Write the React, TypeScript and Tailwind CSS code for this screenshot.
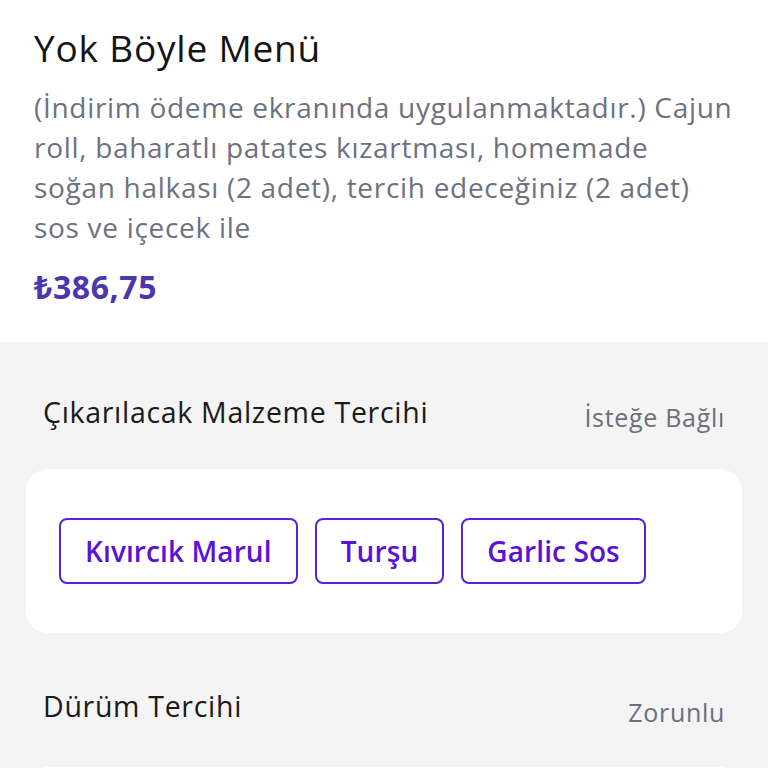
import React, { FC } from 'react';

const font = { fontFamily: '"Open Sans", "Noto Sans", sans-serif' };

interface IChip {
  label: string;
}
const Chip: FC<IChip> = ({ label }) => (
  <div className="h-[66px] px-[24px] flex items-center rounded-[8px] border-2 border-[#5b21d6] text-[#5a12d4] text-[28px] leading-[36px] font-semibold tracking-[0.1px]">
    {label}
  </div>
);

interface ISection {
  title: string;
  tag: string;
  tagTop: string;
}
const SectionHead: FC<ISection> = ({ title, tag, tagTop }) => (
  <div className="flex items-start justify-between pl-[43px] pr-[43px]">
    <span className="text-[28.5px] leading-[36px] text-[#1a1a1a] tracking-[0.7px]">{title}</span>
    <span className={`text-[25px] leading-[36px] text-[#6b6f7b] tracking-[0.7px] ${tagTop}`}>{tag}</span>
  </div>
);

const App: FC = () => {
  return (
    <div className="w-[768px] h-[768px] overflow-hidden bg-[#f4f4f4]" style={font}>
      {/* ürün bilgisi */}
      <div className="bg-white px-[34px] pt-[24px] pb-[35px]">
        <h1 className="text-[37px] leading-[48px] text-[#141414] tracking-[0.8px]">Yok Böyle Menü</h1>
        <p className="mt-[15px] text-[28px] leading-[40px] text-[#6e7180] tracking-[0.7px]">
          (İndirim ödeme ekranında uygulanmaktadır.) Cajun roll, baharatlı patates kızartması, homemade soğan
          halkası (2 adet), tercih edeceğiniz (2 adet) sos ve içecek ile
        </p>
        <div className="mt-[20px] text-[32px] leading-[40px] font-bold text-[#4b36ae] tracking-[0.6px]">₺386,75</div>
      </div>

      <div className="pt-[52px]">
        <SectionHead title="Çıkarılacak Malzeme Tercihi" tag="İsteğe Bağlı" tagTop="mt-[5px]" />
        <div className="mx-[26px] mt-[34px] bg-white rounded-[22px] px-[33px] py-[49px] flex gap-[17px]">
          <Chip label="Kıvırcık Marul" />
          <Chip label="Turşu" />
          <Chip label="Garlic Sos" />
        </div>
      </div>

      <div className="pt-[55px]">
        <SectionHead title="Dürüm Tercihi" tag="Zorunlu" tagTop="mt-[6px]" />
        <div className="mx-[26px] mt-[37px] bg-white rounded-[22px] h-[160px]" />
      </div>
    </div>
  );
};

export default App;
